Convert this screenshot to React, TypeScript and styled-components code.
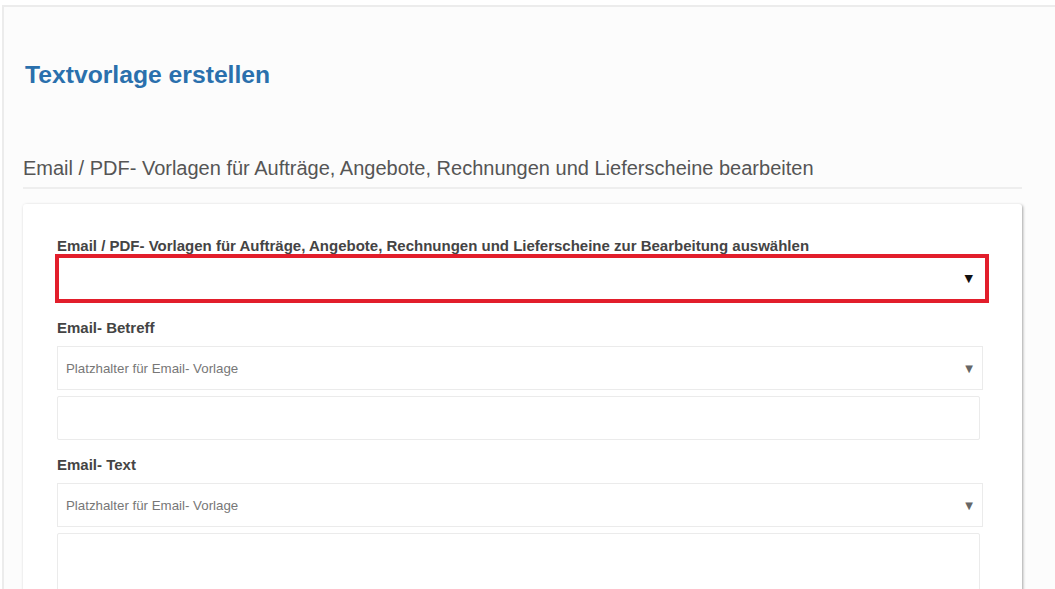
import React from "react";
import styled, { createGlobalStyle } from "styled-components";

const Global = createGlobalStyle`
  html, body { margin: 0; padding: 0; background: #ffffff; }
  body { font-family: "Liberation Sans", Arial, sans-serif; }
  * { box-sizing: border-box; }
`;

const Panel = styled.div`
  margin: 5px 0 0 2px;
  border-top: 2px solid #ececec;
  border-left: 2px solid #ececec;
  background: #fcfcfc;
  padding: 54px 33px 0 19px;
  height: 584px;
  overflow: hidden;
`;

const Title = styled.h1`
  margin: 0 0 0 2px;
  font-size: 24.7px;
  line-height: 28px;
  font-weight: bold;
  color: #2a70ad;
`;

const SubTitle = styled.h2`
  margin: 67px 0 0 0;
  padding-bottom: 7px;
  font-size: 20px;
  line-height: 24px;
  font-weight: normal;
  color: #555555;
  border-bottom: 2px solid #eeeeee;
`;

const Card = styled.div`
  margin-top: 15px;
  background: #ffffff;
  border-radius: 3px;
  box-shadow: 1px 1px 3px rgba(0, 0, 0, 0.35);
  padding: 33px 39px 40px 34px;
`;

const Label = styled.div<{ $top?: number; $bottom?: number }>`
  margin-top: ${(p) => p.$top ?? 0}px;
  margin-bottom: ${(p) => p.$bottom ?? 0}px;
  font-size: 15px;
  line-height: 17px;
  font-weight: bold;
  color: #444444;
`;

const SelectBox = styled.div<{ $highlight?: boolean }>`
  display: flex;
  align-items: center;
  justify-content: space-between;
  height: ${(p) => (p.$highlight ? 49 : 44)}px;
  margin-left: ${(p) => (p.$highlight ? -2 : 0)}px;
  width: ${(p) => (p.$highlight ? "calc(100% + 8px)" : "100%")};
  border: ${(p) => (p.$highlight ? "4px solid #e21e2b" : "1px solid #ebebeb")};
  background: #ffffff;
  padding: 0 ${(p) => (p.$highlight ? 12 : 9)}px 0 8px;
  font-size: 13.3px;
  color: #777777;
`;

const Arrow = styled.span<{ $dark?: boolean }>`
  font-size: ${(p) => (p.$dark ? 11 : 10)}px;
  color: ${(p) => (p.$dark ? "#111111" : "#666666")};
  font-family: "DejaVu Sans", sans-serif;
`;

const TextInput = styled.div<{ $height: number }>`
  margin-top: 6px;
  width: calc(100% - 3px);
  height: ${(p) => p.$height}px;
  border: 1px solid #ebebeb;
  border-radius: 2px;
  background: #ffffff;
`;

export default function App() {
  return (
    <>
      <Global />
      <Panel>
        <Title>Textvorlage erstellen</Title>
        <SubTitle>
          Email / PDF- Vorlagen für Aufträge, Angebote, Rechnungen und Lieferscheine bearbeiten
        </SubTitle>
        <Card>
          <Label>
            Email / PDF- Vorlagen für Aufträge, Angebote, Rechnungen und Lieferscheine zur Bearbeitung auswählen
          </Label>
          <SelectBox $highlight>
            <span />
            <Arrow $dark>▼</Arrow>
          </SelectBox>
          <Label $top={16} $bottom={10}>Email- Betreff</Label>
          <SelectBox>
            <span>Platzhalter für Email- Vorlage</span>
            <Arrow>▼</Arrow>
          </SelectBox>
          <TextInput $height={44} />
          <Label $top={16} $bottom={10}>Email- Text</Label>
          <SelectBox>
            <span>Platzhalter für Email- Vorlage</span>
            <Arrow>▼</Arrow>
          </SelectBox>
          <TextInput $height={90} />
        </Card>
      </Panel>
    </>
  );
}
